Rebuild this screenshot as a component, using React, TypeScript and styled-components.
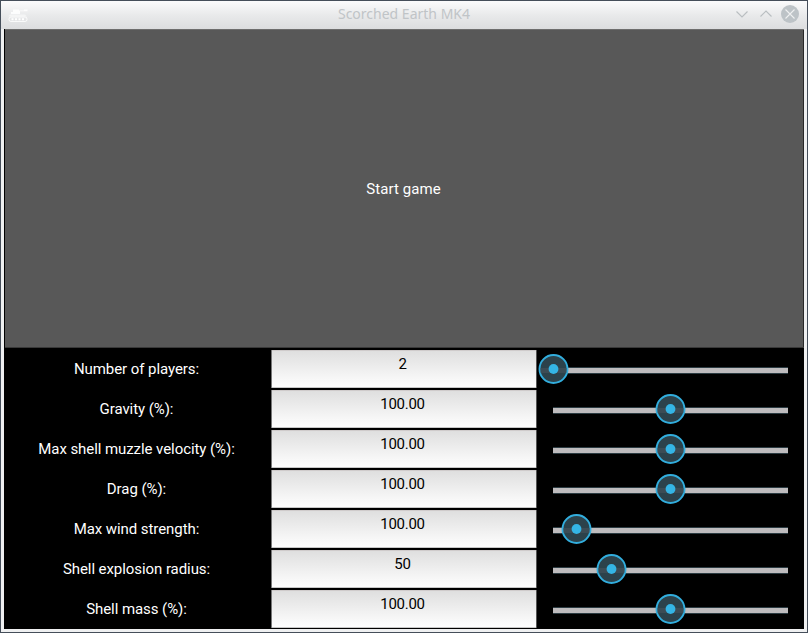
import React, { useState } from "react";
import styled, { createGlobalStyle } from "styled-components";

const GlobalStyle = createGlobalStyle`
  body { margin: 0; overflow: hidden; background: #454e5a; }
  * { box-sizing: border-box; }
`;

const Window = styled.div`
  width: 808px;
  height: 633px;
  display: flex;
  flex-direction: column;
  border: 1px solid #454e5a;
  background: #eff0f1;
`;

const TitleBar = styled.header`
  height: 28px;
  flex: none;
  display: grid;
  grid-template-columns: 80px 1fr 80px;
  align-items: center;
  background: linear-gradient(#fbfbfc 0, #e9eaeb 50%, #dcdddf 100%);
`;

const TankIcon = styled.svg`
  display: block;
  margin: 0 0 1px 7px;
`;

const Title = styled.h1`
  margin: 0 0 2px;
  text-align: center;
  font: 400 14px/20px "Noto Sans", sans-serif;
  color: #c0c4c7;
`;

const WindowButtons = styled.svg`
  display: block;
  justify-self: end;
`;

const Client = styled.main`
  width: 800px;
  height: 600px;
  margin-left: 3px;
  display: flex;
  flex-direction: column;
  background: #000;
  font: 400 15px/18px Roboto, sans-serif;
`;

const StartButton = styled.button`
  height: 320px;
  flex: none;
  margin: 0;
  padding: 0 2px 0 0;
  border: solid #000;
  border-width: 0 0 1px 1px;
  background: #585858;
  background-clip: padding-box;
  box-shadow: inset 0 1px #6e6e6e, inset 0 -1px #393939, inset -1px 0 #282828;
  color: #fff;
  font: inherit;
  letter-spacing: 0.1px;
`;

const Settings = styled.section`
  display: grid;
  grid-auto-rows: 40px;
`;

const Row = styled.div`
  display: grid;
  grid-template-columns: 266px 268px 266px;
`;

const Label = styled.label`
  align-self: center;
  padding-right: 1px;
  text-align: center;
  color: #fff;
  white-space: nowrap;
  letter-spacing: -0.07px;
`;

const Field = styled.input`
  height: 38px;
  margin: 1px;
  width: 266px;
  padding: 0 6px 10px 3px;
  border: 1px solid #000;
  border-width: 0 1px;
  border-color: #777 #555 #777 #777;
  border-radius: 0;
  outline: none;
  background: linear-gradient(#dedede, #ffffff);
  box-shadow: inset 0 1px #cfcbcb, inset 0 -1px #c8c8c8;
  color: #000;
  text-align: center;
  font: inherit;
  letter-spacing: -0.3px;
`;

const Slider = styled.div`
  padding: 0 16px 0 15px;
`;

const Rail = styled.div`
  height: 40px;
  position: relative;
  background: linear-gradient(#2b3b42 0 1px, #bebcbe 1px 6px, #2b3b42 6px 7px) 0 18px / 100% 7px no-repeat;
`;

const Knob = styled.svg`
  position: absolute;
  top: 4px;
  margin-left: -16.5px;
`;

const settings = [
  { label: "Number of players:", value: "2", position: 0 },
  { label: "Gravity (%):", value: "100.00", position: 0.5 },
  { label: "Max shell muzzle velocity (%):", value: "100.00", position: 0.5 },
  { label: "Drag (%):", value: "100.00", position: 0.5 },
  { label: "Max wind strength:", value: "100.00", position: 0.1 },
  { label: "Shell explosion radius:", value: "50", position: 0.25 },
  { label: "Shell mass (%):", value: "100.00", position: 0.5 },
];

function SettingRow({ label, value, position }: (typeof settings)[number]) {
  const [text, setText] = useState(value);
  return (
    <Row>
      <Label>{label}</Label>
      <Field aria-label={label} value={text} onChange={(e) => setText(e.target.value)} />
      <Slider>
        <Rail>
          <Knob width="33" height="32" style={{ left: `${position * 100}%` }}>
            <circle cx="16.5" cy="16" r="14" fill="#2c424b" stroke="#32aede" strokeWidth="1.9" />
            <path d="M3.5 15h26v5h-26z" fill="#415058" opacity=".75" />
            <circle cx="16.5" cy="16" r="4.9" fill="#34b5e5" />
          </Knob>
        </Rail>
      </Slider>
    </Row>
  );
}

export default function App() {
  return (
    <>
      <GlobalStyle />
      <Window>
        <TitleBar>
          <TankIcon width="21" height="18" viewBox="0 0 21 18" fill="#fff">
            <path d="M5 3.5h6v1h5v-1h3.500v1.800H12V8H3V6h2z" opacity=".85" />
            <path d="M2 8.500h15l2 2H0z" opacity=".5" />
            <rect x="1" y="11" width="18" height="4.500" rx="2" fill="none" stroke="#fff" strokeWidth=".8" />
            <path d="M3.500 12.200h2v2h-2zm3.500 0h2v2H7zm3.500 0h2v2h-2zm3.500 0h2v2h-2z" />
          </TankIcon>
          <Title>Scorched Earth MK4</Title>
          <WindowButtons width="80" height="28" fill="none" stroke="#b9bec1" strokeWidth="1.1">
            <path d="M9.5 10.5l5.5 5.5 5.5-5.5M33.5 15.5L39 10l5.5 5.5" />
            <circle cx="63" cy="13" r="9" fill="#bdc3c7" stroke="none" />
            <path d="M58.5 8.5l9 9M67.5 8.5l-9 9" stroke="#eff0f1" />
          </WindowButtons>
        </TitleBar>
        <Client>
          <StartButton>Start game</StartButton>
          <Settings>
            {settings.map((s) => (
              <SettingRow key={s.label} {...s} />
            ))}
          </Settings>
        </Client>
      </Window>
    </>
  );
}
